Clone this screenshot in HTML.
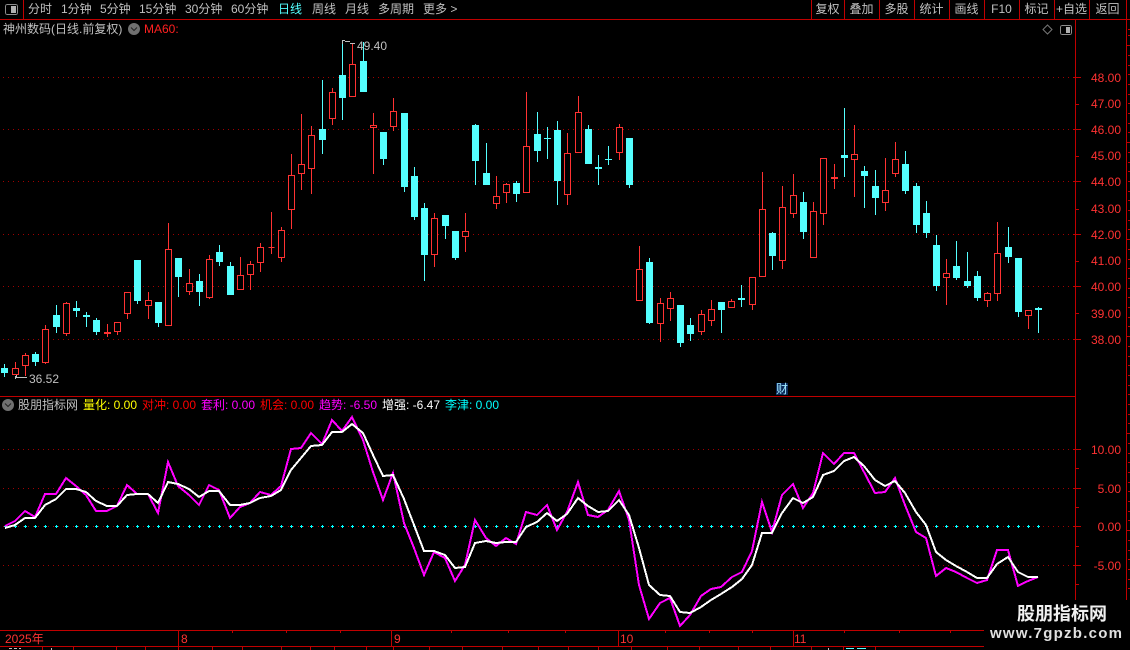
<!DOCTYPE html>
<html lang="zh">
<head>
<meta charset="utf-8">
<title>神州数码</title>
<style>
html,body{margin:0;padding:0;background:#000}
#p{position:relative;width:1130px;height:650px;background:#000;overflow:hidden;font-family:"Liberation Sans","WenQuanYi Zen Hei","Noto Sans CJK SC",sans-serif;font-size:12px;color:#c0c0c0}
#p span{position:absolute;white-space:nowrap;line-height:14px}
svg{position:absolute;left:0;top:0}
.b{width:35px;text-align:center;top:2px}
.a{right:9px;width:50px;text-align:right;color:#ff3232}
.t{top:2px}
.h{top:398px}
.d{top:632px;color:#ff3232}
</style>
</head>
<body>
<div id="p">
<svg width="1130" height="650" viewBox="0 0 1130 650" shape-rendering="crispEdges" fill="none">
<!-- grid -->
<path stroke="#a00000" stroke-dasharray="1 4" d="M3 77.5H1075M3 129.5H1075M3 181.5H1075M3 234.5H1075M3 286.5H1075M3 339.5H1075M3 449.5H1075M3 488.5H1075M3 526.5H1075M3 565.5H1075"/>
<!-- frame lines -->
<path stroke="#c00000" d="M0 19.5H1130M0 396.5H1075M0 630.5H984M0 646.5H984M23.5 0V19M811.5 0V19M844.5 0V19M879.5 0V19M914.5 0V19M949.5 0V19M984.5 0V19M1019.5 0V19M1054.5 0V19M1089.5 0V19M1126.5 0V600M1075.5 19V600M178.5 630V647M391.5 630V647M618.5 630V647M793.5 630V647M232.5 630V633M286.5 630V633M340.5 630V633M451.5 630V633M508.5 630V633M565.5 630V633M665.5 630V633M709.5 630V633M752.5 630V633M844.5 630V633M899.5 630V633M950.5 630V633M42.5 647V650M73.5 647V650M116.5 647V650M145.5 647V650M178.5 647V650M212.5 647V650M242.5 647V650M281.5 647V650M310.5 647V650M334.5 647V650M366.5 647V650M393.5 647V650M429.5 647V650M462.5 647V650M502.5 647V650M538.5 647V650M568.5 647V650M598.5 647V650M631.5 647V650M667.5 647V650M699.5 647V650M738.5 647V650M770.5 647V650M811.5 647V650M843.5 647V650M875.5 647V650"/>
<!-- axis ticks -->
<path stroke="#c00000" d="M1073 77.5h8M1076 104.5h3M1073 129.5h8M1076 156.5h3M1073 181.5h8M1076 209.5h3M1073 234.5h8M1076 261.5h3M1073 286.5h8M1076 313.5h3M1073 339.5h8M1073 449.5h8M1076 468.5h3M1073 488.5h8M1076 507.5h3M1073 526.5h8M1076 546.5h3M1073 565.5h8M1076 584.5h3"/>
<!-- right ruler -->
<path stroke="#c00000" d="M1126 45.5h4M1126 142.5h4M1126 239.5h4M1126 336.5h4M1126 433.5h4M1126 530.5h4M1128 29.5h2M1128 35.5h2M1128 55.5h2M1128 65.5h2M1128 74.5h2M1128 84.5h2M1128 94.5h2M1128 103.5h2M1128 113.5h2M1128 123.5h2M1128 132.5h2M1128 152.5h2M1128 162.5h2M1128 171.5h2M1128 181.5h2M1128 191.5h2M1128 200.5h2M1128 210.5h2M1128 220.5h2M1128 229.5h2M1128 249.5h2M1128 259.5h2M1128 268.5h2M1128 278.5h2M1128 288.5h2M1128 297.5h2M1128 307.5h2M1128 317.5h2M1128 326.5h2M1128 346.5h2M1128 356.5h2M1128 365.5h2M1128 375.5h2M1128 385.5h2M1128 394.5h2M1128 404.5h2M1128 414.5h2M1128 423.5h2M1128 443.5h2M1128 453.5h2M1128 462.5h2M1128 472.5h2M1128 482.5h2M1128 491.5h2M1128 501.5h2M1128 511.5h2M1128 520.5h2M1128 540.5h2M1128 550.5h2M1128 559.5h2M1128 569.5h2M1128 579.5h2M1128 588.5h2"/>
<!-- bottom clipped fragments -->
<path stroke="#c0c0c0" d="M9 648.5h3M14 648.5h3M19 648.5h2M51.5 648V650M828.5 648V650"/>
<path stroke="#54ffff" d="M846 648.5h8M857 648.5h9"/>
<!-- toggle icon -->
<rect x="5.5" y="4.5" width="12" height="10" rx="2" stroke="#8c8c8c"/>
<rect x="11" y="6" width="5" height="7" fill="#b0b0b0"/>
<rect x="1060.5" y="25.5" width="11" height="9" rx="2" stroke="#8c8c8c"/>
<rect x="1066" y="27" width="4" height="6" fill="#b0b0b0"/>
<path d="M1047.5 25l4.5 4.5-4.5 4.5-4.5-4.5z" stroke="#777" shape-rendering="geometricPrecision"/>
<!-- circles -->
<circle cx="134" cy="29" r="6" fill="#707070" shape-rendering="geometricPrecision"/>
<path d="M131 27.5l3 3 3-3" stroke="#222" shape-rendering="geometricPrecision"/>
<circle cx="8" cy="405" r="6" fill="#707070" shape-rendering="geometricPrecision"/>
<path d="M5 403.5l3 3 3-3" stroke="#222" shape-rendering="geometricPrecision"/>
<!-- red wicks -->
<path stroke="#ff3232" d="M15.5 362V375M25.5 353V376M45.5 325V364M66.5 302V336M107.5 324V337M117.5 322V335M127.5 292V319M148.5 292V319M168.5 223V326M189.5 269V295M209.5 255V299M240.5 257V290M250.5 261V290M260.5 243V272M271.5 212V254M281.5 227V262M291.5 154V229M301.5 114V190M311.5 126V194M332.5 88V125M352.5 44V97M373.5 113V174M393.5 98V131M434.5 213V267M465.5 213V252M496.5 176V209M506.5 183V203M526.5 92V193M567.5 133V205M578.5 96V153M619.5 124V160M639.5 246V301M660.5 298V342M670.5 292V321M701.5 310V335M711.5 300V326M731.5 299V308M752.5 277V310M762.5 172V277M782.5 186V269M793.5 174V218M813.5 202V258M823.5 158V225M834.5 164V189M854.5 125V197M885.5 158V211M895.5 142V177M946.5 259V305M987.5 292V307M997.5 222V301M1028.5 310V329"/>
<!-- red bodies -->
<path stroke="#ff3232" fill="#000" d="M12.5 368.5h6v6h-6zM22.5 355.5h6v10h-6zM42.5 329.5h6v33h-6zM63.5 303.5h6v30h-6zM104.5 332.5h6v1h-6zM114.5 322.5h6v9h-6zM124.5 292.5h6v21h-6zM145.5 300.5h6v5h-6zM165.5 249.5h6v76h-6zM186.5 283.5h6v8h-6zM206.5 259.5h6v38h-6zM237.5 275.5h6v14h-6zM247.5 264.5h6v10h-6zM257.5 247.5h6v15h-6zM268.5 247.5h6zM278.5 230.5h6v27h-6zM288.5 175.5h6v34h-6zM298.5 164.5h6v9h-6zM308.5 135.5h6v33h-6zM329.5 92.5h6v26h-6zM349.5 64.5h6v32h-6zM370.5 125.5h6v2h-6zM390.5 111.5h6v15h-6zM431.5 218.5h6v36h-6zM462.5 231.5h6v5h-6zM493.5 196.5h6v7h-6zM503.5 184.5h6v8h-6zM523.5 146.5h6v46h-6zM564.5 153.5h6v41h-6zM575.5 112.5h6v40h-6zM616.5 127.5h6v25h-6zM636.5 269.5h6v31h-6zM657.5 303.5h6v20h-6zM667.5 298.5h6v10h-6zM698.5 314.5h6v17h-6zM708.5 309.5h6v11h-6zM728.5 301.5h6v6h-6zM749.5 277.5h6v27h-6zM759.5 209.5h6v67h-6zM779.5 207.5h6v53h-6zM790.5 195.5h6v18h-6zM810.5 211.5h6v46h-6zM820.5 158.5h6v55h-6zM831.5 177.5h6v1h-6zM851.5 154.5h6v5h-6zM882.5 190.5h6v12h-6zM892.5 159.5h6v14h-6zM943.5 273.5h6v4h-6zM984.5 293.5h6v7h-6zM994.5 253.5h6v40h-6zM1025.5 310.5h6v5h-6z"/>
<!-- cyan wicks -->
<path stroke="#54ffff" d="M4.5 364V377M35.5 352V366M56.5 305V333M76.5 301V317M86.5 312V327M96.5 318V335M137.5 260V304M158.5 302V327M178.5 258V297M199.5 274V306M219.5 245V266M230.5 262V295M322.5 80V154M342.5 42V120M363.5 42V92M383.5 132V165M404.5 113V192M414.5 167V220M424.5 203V281M445.5 215V239M455.5 231V260M475.5 124V185M486.5 143V185M516.5 181V202M537.5 112V162M547.5 127V159M557.5 121V205M588.5 125V164M598.5 155V185M608.5 146V165M629.5 138V188M649.5 258V324M680.5 305V347M690.5 318V341M721.5 302V333M741.5 285V307M772.5 232V270M803.5 192V239M844.5 108V177M864.5 166V208M875.5 170V215M905.5 151V194M916.5 183V233M926.5 201V238M936.5 235V291M956.5 241V280M967.5 252V288M977.5 271V301M1008.5 227V263M1018.5 258V317M1038.5 307V333"/>
<!-- cyan bodies -->
<path fill="#54ffff" d="M1 368h7v5h-7zM32 354h7v8h-7zM53 315h7v12h-7zM73 308h7v3h-7zM83 315h7v2h-7zM93 320h7v12h-7zM134 260h7v41h-7zM155 302h7v21h-7zM175 258h7v19h-7zM196 281h7v11h-7zM216 252h7v10h-7zM227 266h7v29h-7zM319 129h7v11h-7zM339 75h7v23h-7zM360 61h7v31h-7zM380 132h7v27h-7zM401 113h7v74h-7zM411 176h7v41h-7zM421 208h7v47h-7zM442 215h7v11h-7zM452 231h7v27h-7zM472 125h7v36h-7zM483 173h7v12h-7zM513 183h7v11h-7zM534 134h7v17h-7zM544 138h7v1h-7zM554 130h7v51h-7zM585 129h7v35h-7zM595 167h7v2h-7zM605 159h7v1h-7zM626 138h7v47h-7zM646 262h7v61h-7zM677 305h7v38h-7zM687 325h7v9h-7zM718 302h7v8h-7zM738 298h7v2h-7zM769 233h7v23h-7zM800 202h7v30h-7zM841 155h7v3h-7zM861 171h7v5h-7zM872 186h7v12h-7zM902 164h7v27h-7zM913 186h7v39h-7zM923 213h7v20h-7zM933 245h7v41h-7zM953 266h7v12h-7zM964 281h7v5h-7zM974 276h7v22h-7zM1005 247h7v10h-7zM1015 258h7v54h-7zM1035 308h7v2h-7z"/>
<!-- price markers -->
<path stroke="#c0c0c0" d="M342 40.5h3M342.5 40V44M345 41.5h5M350 43.5h5M15 377.5h12M15.5 376V379M16.5 375V377"/>
<!-- cyan dots -->
<path stroke="#00ffff" d="M4 526.5h3M5.5 525v3M14 526.5h3M15.5 525v3M24 526.5h3M25.5 525v3M34 526.5h3M35.5 525v3M44 526.5h3M45.5 525v3M55 526.5h3M56.5 525v3M65 526.5h3M66.5 525v3M75 526.5h3M76.5 525v3M85 526.5h3M86.5 525v3M95 526.5h3M96.5 525v3M106 526.5h3M107.5 525v3M116 526.5h3M117.5 525v3M126 526.5h3M127.5 525v3M136 526.5h3M137.5 525v3M147 526.5h3M148.5 525v3M157 526.5h3M158.5 525v3M167 526.5h3M168.5 525v3M177 526.5h3M178.5 525v3M188 526.5h3M189.5 525v3M198 526.5h3M199.5 525v3M208 526.5h3M209.5 525v3M218 526.5h3M219.5 525v3M229 526.5h3M230.5 525v3M239 526.5h3M240.5 525v3M249 526.5h3M250.5 525v3M259 526.5h3M260.5 525v3M270 526.5h3M271.5 525v3M280 526.5h3M281.5 525v3M290 526.5h3M291.5 525v3M300 526.5h3M301.5 525v3M310 526.5h3M311.5 525v3M321 526.5h3M322.5 525v3M331 526.5h3M332.5 525v3M341 526.5h3M342.5 525v3M351 526.5h3M352.5 525v3M362 526.5h3M363.5 525v3M372 526.5h3M373.5 525v3M382 526.5h3M383.5 525v3M392 526.5h3M393.5 525v3M403 526.5h3M404.5 525v3M413 526.5h3M414.5 525v3M423 526.5h3M424.5 525v3M433 526.5h3M434.5 525v3M444 526.5h3M445.5 525v3M454 526.5h3M455.5 525v3M464 526.5h3M465.5 525v3M474 526.5h3M475.5 525v3M485 526.5h3M486.5 525v3M495 526.5h3M496.5 525v3M505 526.5h3M506.5 525v3M515 526.5h3M516.5 525v3M525 526.5h3M526.5 525v3M536 526.5h3M537.5 525v3M546 526.5h3M547.5 525v3M556 526.5h3M557.5 525v3M566 526.5h3M567.5 525v3M577 526.5h3M578.5 525v3M587 526.5h3M588.5 525v3M597 526.5h3M598.5 525v3M607 526.5h3M608.5 525v3M618 526.5h3M619.5 525v3M628 526.5h3M629.5 525v3M638 526.5h3M639.5 525v3M648 526.5h3M649.5 525v3M659 526.5h3M660.5 525v3M669 526.5h3M670.5 525v3M679 526.5h3M680.5 525v3M689 526.5h3M690.5 525v3M700 526.5h3M701.5 525v3M710 526.5h3M711.5 525v3M720 526.5h3M721.5 525v3M730 526.5h3M731.5 525v3M740 526.5h3M741.5 525v3M751 526.5h3M752.5 525v3M761 526.5h3M762.5 525v3M771 526.5h3M772.5 525v3M781 526.5h3M782.5 525v3M792 526.5h3M793.5 525v3M802 526.5h3M803.5 525v3M812 526.5h3M813.5 525v3M822 526.5h3M823.5 525v3M833 526.5h3M834.5 525v3M843 526.5h3M844.5 525v3M853 526.5h3M854.5 525v3M863 526.5h3M864.5 525v3M874 526.5h3M875.5 525v3M884 526.5h3M885.5 525v3M894 526.5h3M895.5 525v3M904 526.5h3M905.5 525v3M915 526.5h3M916.5 525v3M925 526.5h3M926.5 525v3M935 526.5h3M936.5 525v3M945 526.5h3M946.5 525v3M955 526.5h3M956.5 525v3M966 526.5h3M967.5 525v3M976 526.5h3M977.5 525v3M986 526.5h3M987.5 525v3M996 526.5h3M997.5 525v3M1007 526.5h3M1008.5 525v3M1017 526.5h3M1018.5 525v3M1027 526.5h3M1028.5 525v3M1037 526.5h3M1038.5 525v3"/>
<!-- magenta line -->
<polyline stroke="#ff00ff" stroke-width="2" points="5,526 15,521 25,511 35,517 45,494 56,494 66,478 76,486 86,495 96,511 107,511 117,506 127,485 137,494 148,494 158,513 168,462 178,486 189,495 199,505 209,485 219,490 230,518 240,507 250,503 260,492 271,495 281,486 291,449 301,448 311,433 322,444 332,420 342,431 352,417 363,440 373,472 383,500 393,473 404,523 414,548 424,575 434,552 445,558 455,581 465,565 475,520 486,538 496,546 506,538 516,544 526,512 537,515 547,505 557,530 567,512 578,482 588,515 598,517 608,510 619,491 629,520 639,585 649,619 660,603 670,598 680,626 690,615 701,596 711,589 721,587 732,577 742,572 752,551 762,502 772,532 782,495 793,484 803,508 813,493 823,453 834,464 844,453 854,453 864,472 875,493 885,492 895,478 905,505 916,532 926,538 936,576 946,568 956,572 967,578 977,583 987,580 997,550 1008,550 1018,586 1028,581 1038,577"/>
<!-- white line -->
<polyline stroke="#ffffff" stroke-width="2" points="5,528 15,525 25,518 35,518 45,505 56,499 66,489 76,489 86,492 96,501 107,506 117,506 127,495 137,494 148,494 158,503 168,482 178,484 189,489 199,497 209,491 219,491 230,505 240,505 250,503 260,498 271,496 281,490 291,470 301,458 311,446 322,445 332,432 342,432 352,424 363,433 373,455 383,476 393,475 404,499 414,525 424,551 434,551 445,555 455,568 465,567 475,543 486,541 496,543 506,542 516,542 526,527 537,522 547,513 557,521 567,514 578,498 588,506 598,512 608,511 619,500 629,515 639,548 649,585 660,595 670,596 680,612 690,613 701,607 711,600 721,594 732,587 742,579 752,565 762,533 772,533 782,513 793,498 803,503 813,497 823,475 834,471 844,461 854,457 864,466 875,480 885,486 895,481 905,493 916,512 926,525 936,552 946,560 956,566 967,572 977,578 987,578 997,564 1008,557 1018,572 1028,577 1038,577"/>
<!-- 财 box -->
<rect x="776" y="383" width="12" height="12" fill="#0a2a5a"/>
<!-- watermark box -->
<rect x="984" y="600" width="146" height="50" fill="#000"/>
</svg>

<span class="t" style="left:28px">分时</span>
<span class="t" style="left:61px">1分钟</span>
<span class="t" style="left:100px">5分钟</span>
<span class="t" style="left:139px">15分钟</span>
<span class="t" style="left:185px">30分钟</span>
<span class="t" style="left:231px">60分钟</span>
<span class="t" style="left:278px;color:#54ffff">日线</span>
<span class="t" style="left:312px">周线</span>
<span class="t" style="left:345px">月线</span>
<span class="t" style="left:378px">多周期</span>
<span class="t" style="left:423px">更多 &gt;</span>

<span class="b" style="left:810px">复权</span>
<span class="b" style="left:844px">叠加</span>
<span class="b" style="left:879px">多股</span>
<span class="b" style="left:914px">统计</span>
<span class="b" style="left:949px">画线</span>
<span class="b" style="left:984px">F10</span>
<span class="b" style="left:1019px">标记</span>
<span class="b" style="left:1054px">+自选</span>
<span class="b" style="left:1090px">返回</span>

<span style="left:3px;top:22px">神州数码(日线.前复权)</span>
<span style="left:144px;top:22px;color:#ff2020">MA60:</span>

<span style="left:357px;top:39px">49.40</span>
<span style="left:29px;top:372px">36.52</span>

<span class="a" style="top:71px">48.00</span>
<span class="a" style="top:97px">47.00</span>
<span class="a" style="top:123px">46.00</span>
<span class="a" style="top:149px">45.00</span>
<span class="a" style="top:175px">44.00</span>
<span class="a" style="top:202px">43.00</span>
<span class="a" style="top:228px">42.00</span>
<span class="a" style="top:254px">41.00</span>
<span class="a" style="top:280px">40.00</span>
<span class="a" style="top:307px">39.00</span>
<span class="a" style="top:333px">38.00</span>
<span class="a" style="top:443px">10.00</span>
<span class="a" style="top:482px">5.00</span>
<span class="a" style="top:520px">0.00</span>
<span class="a" style="top:559px">-5.00</span>

<span style="left:776px;top:382px;width:12px;text-align:center;color:#9fe8ff">财</span>

<span class="h" style="left:18px">股朋指标网</span>
<span class="h" style="left:83px;color:#ffff00">量化: 0.00</span>
<span class="h" style="left:142px;color:#ff0000">对冲: 0.00</span>
<span class="h" style="left:201px;color:#ff00ff">套利: 0.00</span>
<span class="h" style="left:260px;color:#ff0000">机会: 0.00</span>
<span class="h" style="left:319px;color:#ff00ff">趋势: -6.50</span>
<span class="h" style="left:382px;color:#ffffff">增强: -6.47</span>
<span class="h" style="left:445px;color:#00ffff">李津: 0.00</span>

<span class="d" style="left:5px">2025年</span>
<span class="d" style="left:181px">8</span>
<span class="d" style="left:394px">9</span>
<span class="d" style="left:620px">10</span>
<span class="d" style="left:794px">11</span>

<span style="left:1017px;top:604px;font-size:18px;line-height:20px;font-weight:bold;color:#f0f0f0">股朋指标网</span>
<span style="left:990px;top:625px;font-size:15px;line-height:17px;font-weight:bold;letter-spacing:1.25px;color:#e0e0e0">www.7gpzb.com</span>
</div>
</body>
</html>
